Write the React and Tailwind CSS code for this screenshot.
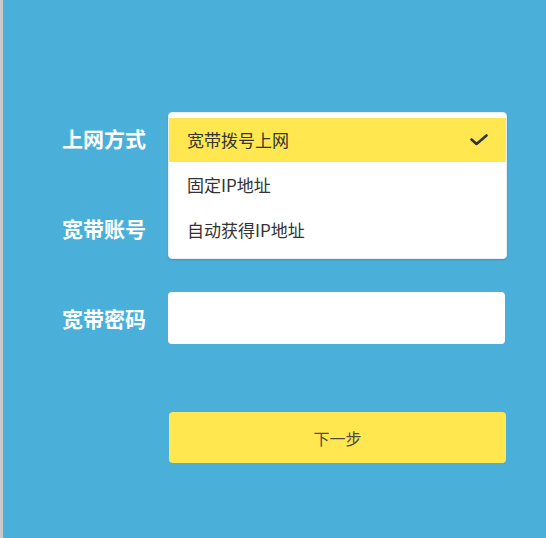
import React, { useState } from 'react';

const options = ['宽带拨号上网', '固定IP地址', '自动获得IP地址'];

const CheckIcon = () => (
  <svg width="18" height="12" viewBox="0 0 18 12" fill="none">
    <path d="M1.5 5.5 L6.5 10 L16.5 1.5" stroke="#333" strokeWidth="2.6" strokeLinecap="round" strokeLinejoin="round" />
  </svg>
);

const Label = ({ children }) => (
  <div className="w-[106px] shrink-0 text-[21px] font-bold text-white leading-none pt-[1px]">{children}</div>
);

export default function App() {
  const [selected, setSelected] = useState(0);

  return (
    <div
      className="w-[546px] h-[538px] bg-[#4bb0d9] border-l-[3px] border-[#c9c9c9] overflow-hidden"
      style={{ fontFamily: '"Noto Sans CJK SC", "Noto Sans", sans-serif' }}
    >
      <div className="pt-[112px] pl-[59px] flex flex-col">
        {/* 上网方式 */}
        <div className="flex items-center h-[52px]">
          <Label>上网方式</Label>
          <div className="relative w-[339px] h-[52px]">
            <div className="absolute left-0 top-0 w-[339px] z-10 bg-white rounded-[4px] border border-[#e8eef2] shadow-[0_1px_2px_rgba(0,0,0,0.15)] pt-[5px] pb-[6px]">
              {options.map((opt, i) => (
                <div
                  key={opt}
                  onClick={() => setSelected(i)}
                  className={`flex items-center justify-between pl-[18px] pr-[18px] text-[17px] text-[#333] cursor-pointer ${
                    i === 0 ? 'h-[44px]' : 'h-[45px]'
                  } ${i === selected ? 'bg-[#ffe84f]' : 'bg-white'}`}
                >
                  <span>{opt}</span>
                  {i === selected && <CheckIcon />}
                </div>
              ))}
            </div>
          </div>
        </div>

        {/* 宽带账号 */}
        <div className="flex items-center h-[52px] mt-[38px]">
          <Label>宽带账号</Label>
          <div className="w-[337px] h-[52px] bg-white rounded-[4px]" />
        </div>

        {/* 宽带密码 */}
        <div className="flex items-center h-[52px] mt-[38px]">
          <Label>宽带密码</Label>
          <input
            type="password"
            className="w-[337px] h-[52px] bg-white rounded-[4px] outline-none px-3 text-[16px]"
          />
        </div>

        {/* 下一步 */}
        <div className="flex mt-[68px] pl-[107px]">
          <button className="w-[337px] h-[51px] bg-[#ffe84f] rounded-[4px] text-[16px] text-[#4a4a3c]">
            下一步
          </button>
        </div>
      </div>
    </div>
  );
}
